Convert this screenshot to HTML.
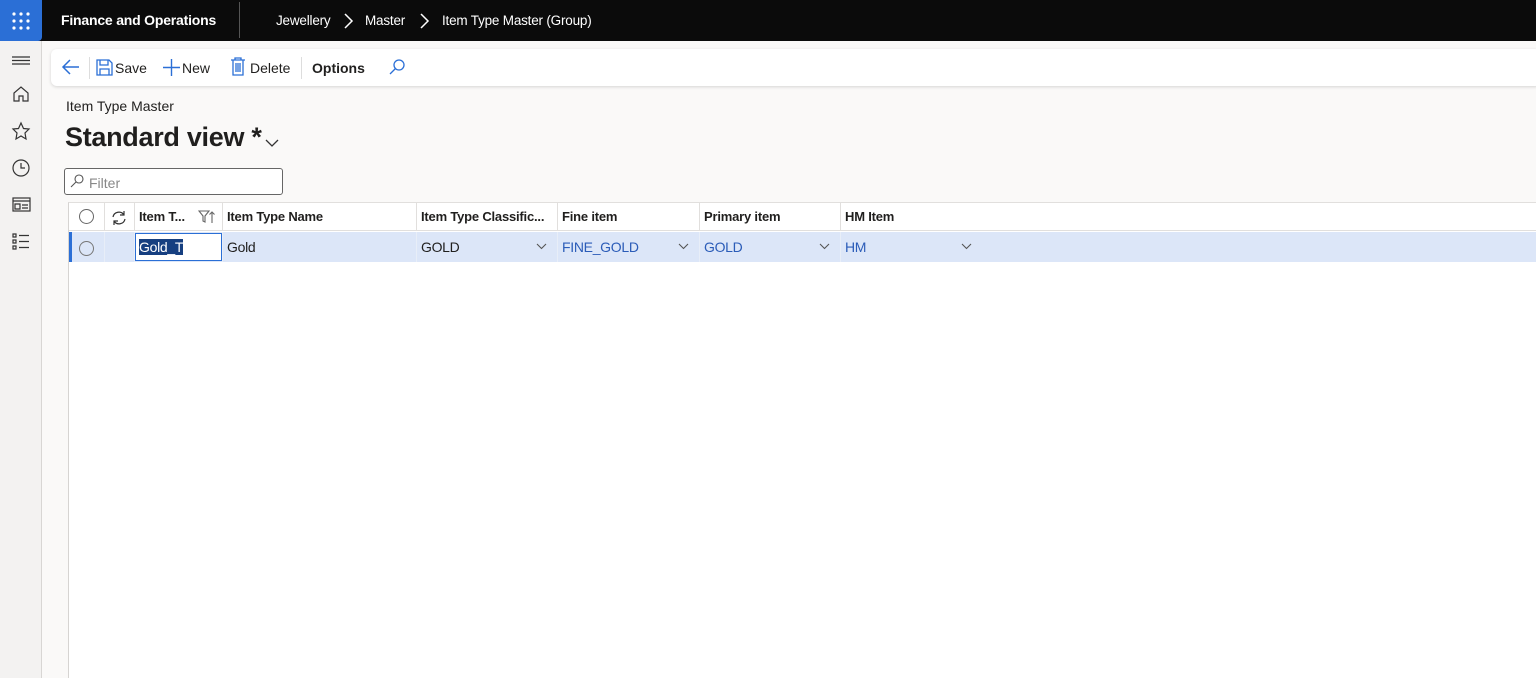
<!DOCTYPE html>
<html><head><style>
*{box-sizing:border-box;margin:0;padding:0}
body{width:1536px;height:678px;overflow:hidden;background:#faf9f8;font-family:"Liberation Sans",sans-serif;font-size:14px;color:#201f1e;position:relative}
.abs{position:absolute}
.top{left:0;top:0;width:1536px;height:41px;background:#0b0b0b;color:#fff}
.rail{left:0;top:41px;width:42px;height:637px;background:#f3f2f1;border-right:1px solid #d8d6d4}
.tb{left:51px;top:49px;width:1490px;height:37px;background:#fff;border-radius:6px;box-shadow:0 1px 3px rgba(0,0,0,.15)}
.grid{left:68px;top:202px;width:1468px;height:476px;background:#fff;border-left:1px solid #d6d4d2;border-top:1px solid #e1dfdd}
.c{position:absolute;top:0;height:28px;border-right:1px solid #e1dfdd;border-bottom:1px solid #e1dfdd;font-weight:600;font-size:13px;line-height:28px;padding-left:4px;letter-spacing:-0.2px}
.r{position:absolute;top:29px;height:30px;background:#dce6f8;border-right:1px solid #e8eef8;font-size:14px;line-height:30px;padding-left:4px;letter-spacing:-0.3px}
.chev{position:absolute;right:10px;top:11px}
.rad{display:inline-block;width:15px;height:15px;border:1px solid #666;border-radius:50%;vertical-align:middle}
</style></head><body>
<div class="abs top">
 <div class="abs" style="left:0;top:0;width:42px;height:41px;background:#2b6fd6;border-radius:0 0 4px 0">
  <svg width="42" height="41"><g fill="#fff"><circle cx="14" cy="14" r="1.6"/><circle cx="21" cy="14" r="1.6"/><circle cx="28" cy="14" r="1.6"/><circle cx="14" cy="21" r="1.6"/><circle cx="21" cy="21" r="1.6"/><circle cx="28" cy="21" r="1.6"/><circle cx="14" cy="28" r="1.6"/><circle cx="21" cy="28" r="1.6"/><circle cx="28" cy="28" r="1.6"/></g></svg>
 </div>
 <div class="abs" style="left:61px;top:12px;font-weight:600;font-size:14px;letter-spacing:-0.2px">Finance and Operations</div>
 <div class="abs" style="left:239px;top:2px;width:1px;height:36px;background:#555"></div>
 <div class="abs" style="left:276px;top:13px;font-size:13.5px;letter-spacing:-0.2px">Jewellery</div>
 <svg class="abs" style="left:342px;top:12px" width="12" height="18" fill="none" stroke="#fff" stroke-width="1.5"><path d="M3 2l7 7-7 7"/></svg>
 <div class="abs" style="left:365px;top:13px;font-size:13.5px;letter-spacing:-0.2px">Master</div>
 <svg class="abs" style="left:418px;top:12px" width="12" height="18" fill="none" stroke="#fff" stroke-width="1.5"><path d="M3 2l7 7-7 7"/></svg>
 <div class="abs" style="left:442px;top:13px;font-size:13.5px;letter-spacing:-0.2px">Item Type Master (Group)</div>
</div>
<div class="abs rail">
 <svg width="42" height="230" style="position:absolute;left:0;top:0" stroke="#333" fill="none" stroke-width="1.2">
  <path d="M12 16h18M12 19.5h18M12 23h18"/>
  <path d="M14 60v-8l7-6 7 6v8h-5v-5h-4v5z"/>
  <path d="M21 82l2.5 5.5 5.5.5-4 4 1 6-5-3-5 3 1-6-4-4 5.5-.5z"/>
  <circle cx="21" cy="127" r="8"/><path d="M21 122v5h4"/>
  <rect x="13" y="157" width="17" height="13"/><path d="M13 160h17M15 163h5v5h-5zM22 164h6M22 167h6"/>
  <path d="M13 193h3v3h-3zM13 199h3v3h-3zM13 205h3v3h-3zM19 194.5h10M19 200.5h10M19 206.5h10"/>
 </svg>
</div>
<div class="abs tb">
 <svg class="abs" style="left:10px;top:9px" width="20" height="18" fill="none" stroke="#2b6fd6" stroke-width="1.5"><path d="M18 9H2M9 2L2 9l7 7"/></svg>
 <div class="abs" style="left:38px;top:8px;width:1px;height:22px;background:#ddd"></div>
 <svg class="abs" style="left:45px;top:10px" width="17" height="17" fill="none" stroke="#2b6fd6" stroke-width="1.3"><path d="M1 1h12l3 3v12H1zM4 1v5h8V1M4 16v-6h9v6"/></svg>
 <div class="abs" style="left:64px;top:11px;font-size:14px">Save</div>
 <svg class="abs" style="left:111px;top:9px" width="19" height="19" stroke="#2b6fd6" stroke-width="1.4"><path d="M9.5 1v17M1 9.5h17"/></svg>
 <div class="abs" style="left:131px;top:11px">New</div>
 <svg class="abs" style="left:179px;top:8px" width="16" height="19" fill="none" stroke="#2b6fd6" stroke-width="1.3"><path d="M1 3h14M5 3V1h6v2M3 3v15h10V3M6 6v9M8 6v9M10 6v9"/></svg>
 <div class="abs" style="left:199px;top:11px">Delete</div>
 <div class="abs" style="left:250px;top:8px;width:1px;height:22px;background:#ddd"></div>
 <div class="abs" style="left:261px;top:11px;font-weight:600">Options</div>
 <svg class="abs" style="left:337px;top:9px" width="18" height="18" fill="none" stroke="#2b6fd6" stroke-width="1.3"><circle cx="11" cy="7" r="5"/><path d="M7.5 10.5L2 16"/></svg>
</div>
<div class="abs" style="left:66px;top:98px;font-size:14px">Item Type Master</div>
<div class="abs" style="left:65px;top:122px;font-size:27px;font-weight:600;letter-spacing:-0.3px">Standard view *</div>
<svg class="abs" style="left:265px;top:138px" width="14" height="10" fill="none" stroke="#333" stroke-width="1.3"><path d="M1 2l6 6 6-6"/></svg>
<div class="abs" style="left:64px;top:168px;width:219px;height:27px;border:1px solid #666;border-radius:3px;background:#fff">
 <svg class="abs" style="left:5px;top:5px" width="14" height="14" fill="none" stroke="#555" stroke-width="1.1"><circle cx="9" cy="5" r="4"/><path d="M6 8L1 13"/></svg>
 <div class="abs" style="left:24px;top:6px;color:#888;font-size:14px">Filter</div>
</div>
<div class="abs grid">
 <div class="c" style="left:0;width:36px;padding-left:10px;line-height:26px"><span class="rad"></span></div>
 <div class="c" style="left:36px;width:30px;padding-left:6px"><svg width="16" height="16" fill="none" stroke="#333" stroke-width="1.2" style="vertical-align:middle"><path d="M2 7a6 6 0 0 1 11-2M14 9a6 6 0 0 1-11 2M13 1v4h-4M3 15v-4h4"/></svg></div>
 <div class="c" style="left:66px;width:88px">Item T...<svg style="position:absolute;right:6px;top:7px" width="18" height="14" fill="none" stroke="#666" stroke-width="1.1"><path d="M1 1h10L7 6v6L5 11V6z M14 13V2M11.5 4.5L14 2l2.5 2.5"/></svg></div>
 <div class="c" style="left:154px;width:194px">Item Type Name</div>
 <div class="c" style="left:348px;width:141px">Item Type Classific...</div>
 <div class="c" style="left:489px;width:142px">Fine item</div>
 <div class="c" style="left:631px;width:141px">Primary item</div>
 <div class="c" style="left:772px;width:696px;border-right:none">HM Item</div>
 <div class="r" style="left:0;width:36px;border-left:3px solid #2b6fd6;padding-left:7px"><span class="rad" style="border-color:#777"></span></div>
 <div class="r" style="left:36px;width:30px"></div>
 <div class="r" style="left:66px;width:88px;padding:0"><div style="position:absolute;left:0;top:1px;width:87px;height:28px;background:#fff;border:1px solid #2b6fd6;padding-left:3px;line-height:26px"><span style="background:#163f80;color:#fff">Gold_T</span></div></div>
 <div class="r" style="left:154px;width:194px">Gold</div>
 <div class="r" style="left:348px;width:141px">GOLD<svg class="chev" width="11" height="7" fill="none" stroke="#555" stroke-width="1.1"><path d="M1 1l4.5 4.5L10 1"/></svg></div>
 <div class="r" style="left:489px;width:142px;color:#2b5cb8">FINE_GOLD<svg class="chev" width="11" height="7" fill="none" stroke="#555" stroke-width="1.1"><path d="M1 1l4.5 4.5L10 1"/></svg></div>
 <div class="r" style="left:631px;width:141px;color:#2b5cb8">GOLD<svg class="chev" width="11" height="7" fill="none" stroke="#555" stroke-width="1.1"><path d="M1 1l4.5 4.5L10 1"/></svg></div>
 <div class="r" style="left:772px;width:696px;color:#2b5cb8;border-right:none">HM<svg class="chev" style="left:120px;right:auto" width="11" height="7" fill="none" stroke="#555" stroke-width="1.1"><path d="M1 1l4.5 4.5L10 1"/></svg></div>
</div>
</body></html>
